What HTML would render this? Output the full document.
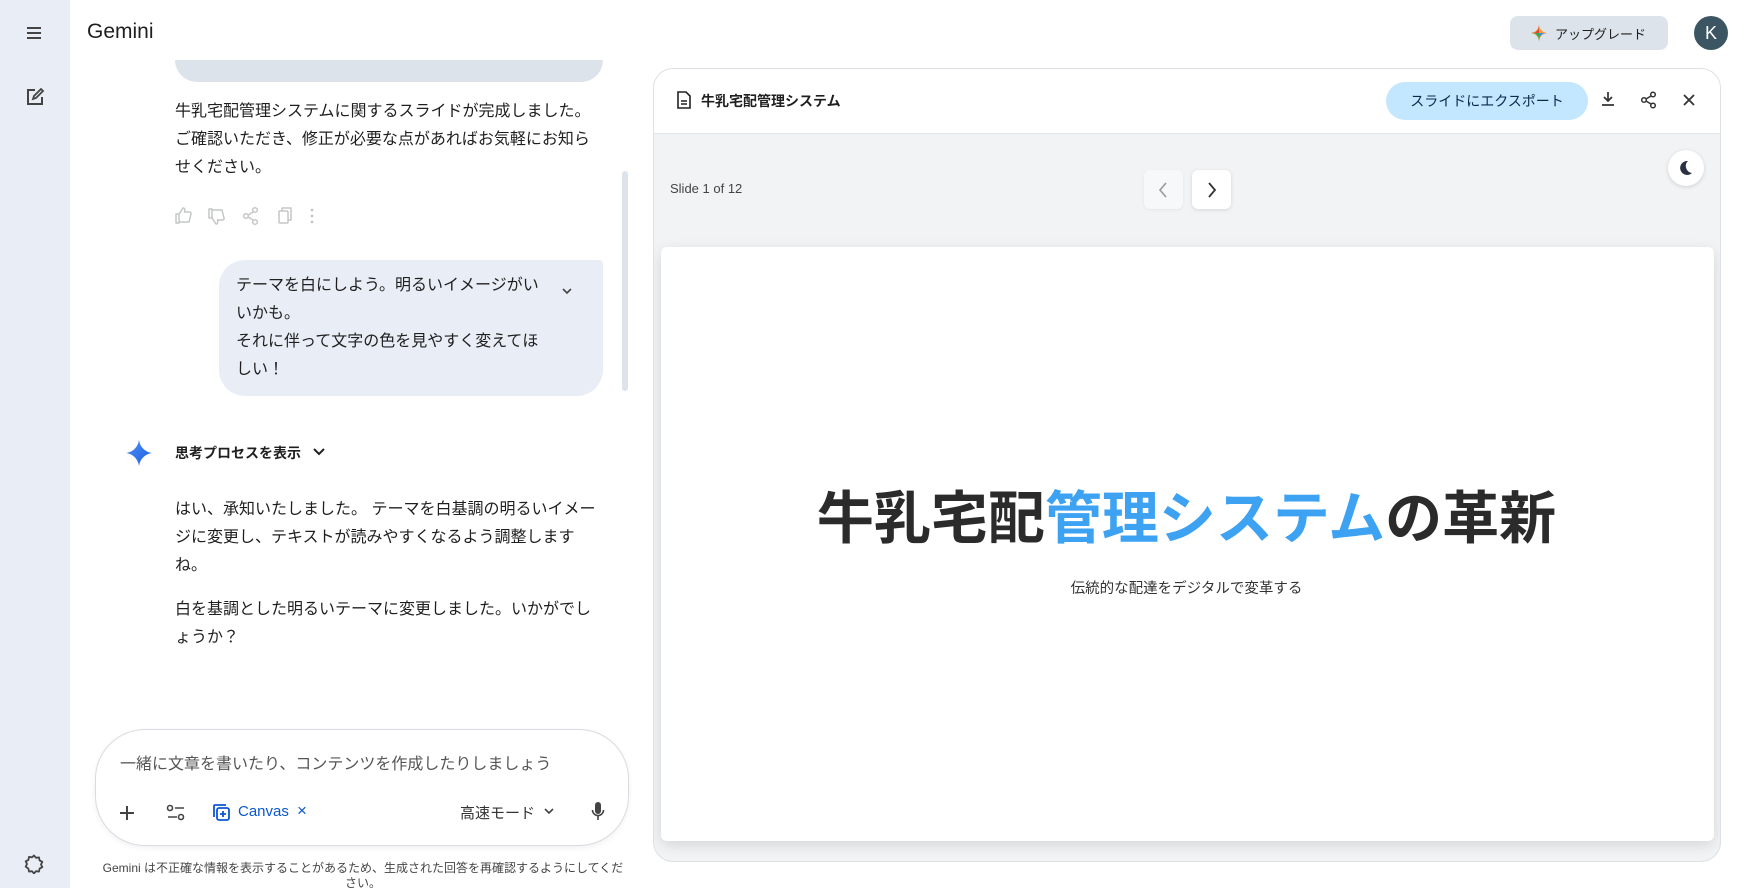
<!DOCTYPE html>
<html><head><meta charset="utf-8">
<style>
*{box-sizing:border-box;margin:0;padding:0}
body{width:1744px;height:888px;overflow:hidden;background:#fff;font-family:"Liberation Sans","Noto Sans CJK JP",sans-serif;color:#1f1f1f;position:relative}
.abs{position:absolute}
.side{left:0;top:0;width:70px;height:888px;background:#e9eef6}
.t{font-size:16px;line-height:28px;color:#1f1f1f;white-space:nowrap}
svg{display:block}
</style></head><body>
<div class="abs side"></div>
<svg class="abs" style="left:25px;top:25px" width="18" height="16"><path d="M2 3h14M2 8h14M2 13h14" stroke="#444" stroke-width="2"/></svg>
<svg class="abs" style="left:25px;top:87px" width="20" height="20" viewBox="0 0 20 20"><path d="M10 3H3v14h14v-7" fill="none" stroke="#444" stroke-width="2"/><path d="M8 12l1-3 7-7 2 2-7 7z" fill="none" stroke="#444" stroke-width="1.8"/></svg>
<svg class="abs" style="left:24px;top:854px" width="20" height="20" viewBox="0 0 20 20"><path d="M10 1.5l2 2.3 3-.4.6 3 2.7 1.4-1.3 2.7 1.3 2.7-2.7 1.4-.6 3-3-.4-2 2.3-2-2.3-3 .4-.6-3L1.7 12.7 3 10 1.7 7.3l2.7-1.4.6-3 3 .4z" fill="none" stroke="#444" stroke-width="1.8" stroke-linejoin="round"/></svg>
<div class="abs" style="left:87px;top:20px;font-size:21px;color:#1f1f1f">Gemini</div>

<div class="abs" style="left:175px;top:60px;width:428px;height:22px;background:#dde3ea;border-radius:0 0 22px 22px"></div>
<div class="abs t" style="left:175px;top:98px">牛乳宅配管理システムに関するスライドが完成しました。<br>ご確認いただき、修正が必要な点があればお気軽にお知ら<br>せください。</div>
<svg class="abs" style="left:174px;top:206px" width="150" height="20" viewBox="0 0 150 20">
<g fill="none" stroke="#c4c7c5" stroke-width="1.5" stroke-linejoin="round">
<path d="M2 8h3v9H2zM5 8l4-6c2 0 2 2 1.5 4h5c1 0 2 1 1.5 2l-2 8H5"/>
<path d="M35 12h3V3h-3zM38 12l4 6c2 0 2-2 1.5-4h5c1 0 2-1 1.5-2l-2-8H38"/>
<circle cx="81" cy="4" r="2.3"/><circle cx="72" cy="10" r="2.3"/><circle cx="81" cy="16" r="2.3"/><path d="M74 9l5-3M74 11l5 3"/>
<rect x="105" y="5" width="9" height="12" rx="1"/><path d="M108 5V2h9v12h-3"/>
</g><g fill="#c4c7c5"><circle cx="138" cy="4" r="1.4"/><circle cx="138" cy="10" r="1.4"/><circle cx="138" cy="16" r="1.4"/></g></svg>
<div class="abs" style="left:622px;top:171px;width:6px;height:220px;background:#dde3ea;border-radius:3px"></div>
<div class="abs" style="left:219px;top:260px;width:384px;height:136px;background:#e9eef6;border-radius:26px 4px 26px 26px"></div>
<div class="abs t" style="left:236px;top:272px">テーマを白にしよう。明るいイメージがい<br>いかも。<br>それに伴って文字の色を見やすく変えてほ<br>しい！</div>
<svg class="abs" style="left:561px;top:286px" width="12" height="10"><path d="M2 3l4 4 4-4" fill="none" stroke="#444" stroke-width="1.6"/></svg>
<svg class="abs" style="left:126px;top:440px" width="26" height="26" viewBox="0 0 26 26"><defs><linearGradient id="g" x1="0" y1="0" x2="1" y2="1"><stop offset="0" stop-color="#4f8ff7"/><stop offset="1" stop-color="#1a5fe0"/></linearGradient></defs><path d="M13 0C14 7 19 12 26 13 19 14 14 19 13 26 12 19 7 14 0 13 7 12 12 7 13 0z" fill="url(#g)"/></svg>
<div class="abs" style="left:175px;top:443px;font-size:14px;line-height:20px;font-weight:bold;color:#1f1f1f">思考プロセスを表示</div>
<svg class="abs" style="left:312px;top:446px" width="14" height="12"><path d="M2 3l5 5 5-5" fill="none" stroke="#222" stroke-width="2"/></svg>
<div class="abs t" style="left:175px;top:496px">はい、承知いたしました。 テーマを白基調の明るいイメー<br>ジに変更し、テキストが読みやすくなるよう調整します<br>ね。</div>
<div class="abs t" style="left:175px;top:596px">白を基調とした明るいテーマに変更しました。いかがでし<br>ょうか？</div>

<div class="abs" style="left:95px;top:729px;width:534px;height:117px;border:1px solid #d8dce2;border-radius:50px;background:#fff;box-shadow:0 2px 6px rgba(0,0,0,.06)"></div>
<div class="abs" style="left:120px;top:750px;font-size:16px;color:#555;white-space:nowrap">一緒に文章を書いたり、コンテンツを作成したりしましょう</div>
<svg class="abs" style="left:118px;top:804px" width="18" height="18"><path d="M9 2v14M2 9h14" stroke="#444" stroke-width="2"/></svg>
<svg class="abs" style="left:166px;top:804px" width="20" height="18"><circle cx="4" cy="4" r="2.5" fill="none" stroke="#444" stroke-width="1.6"/><path d="M9 4h9M2 13h9" stroke="#444" stroke-width="1.6"/><circle cx="15" cy="13" r="2.5" fill="none" stroke="#444" stroke-width="1.6"/></svg>
<svg class="abs" style="left:212px;top:803px" width="20" height="20" viewBox="0 0 20 20"><rect x="5" y="5" width="12" height="12" rx="2" fill="none" stroke="#0b57d0" stroke-width="1.8"/><path d="M2 14V3a1 1 0 011-1h11M11 8v6M8 11h6" fill="none" stroke="#0b57d0" stroke-width="1.8"/></svg>
<div class="abs" style="left:238px;top:803px;font-size:15px;color:#0b57d0">Canvas</div>
<div class="abs" style="left:297px;top:801px;font-size:17px;color:#0b57d0">×</div>
<div class="abs" style="left:460px;top:802px;font-size:15px;color:#333">高速モード</div>
<svg class="abs" style="left:543px;top:806px" width="12" height="10"><path d="M2 3l4 4 4-4" fill="none" stroke="#444" stroke-width="1.6"/></svg>
<svg class="abs" style="left:591px;top:801px" width="14" height="22"><rect x="4" y="1" width="6" height="12" rx="3" fill="#444"/><path d="M1.5 9a5.5 5.5 0 0011 0M7 15v4" fill="none" stroke="#444" stroke-width="1.6"/></svg>
<div class="abs" style="left:95px;top:861px;width:536px;text-align:center;font-size:12px;line-height:15px;color:#444">Gemini は不正確な情報を表示することがあるため、生成された回答を再確認するようにしてくだ<br>さい。</div>

<div class="abs" style="left:1510px;top:16px;width:158px;height:34px;background:#dde3ea;border-radius:8px"></div>
<svg class="abs" style="left:1531px;top:25px" width="16" height="16" viewBox="0 0 26 26"><path d="M13 0C14 7 19 12 26 13 19 14 14 19 13 26 12 19 7 14 0 13 7 12 12 7 13 0z" fill="#e8a33d"/><path d="M13 13L26 13 19 14 14 19 13 26z" fill="#4285f4"/><path d="M13 0L13 13 0 13 7 12 12 7z" fill="#ea4335"/><path d="M0 13L13 13 13 26 12 19 7 14z" fill="#34a853"/></svg>
<div class="abs" style="left:1555px;top:24px;font-size:13px;color:#1f1f1f">アップグレード</div>
<div class="abs" style="left:1694px;top:16px;width:34px;height:34px;border-radius:50%;background:#3c5562;color:#fff;font-size:18px;text-align:center;line-height:34px">K</div>

<div class="abs" style="left:653px;top:68px;width:1068px;height:794px;border:1px solid #dde0e4;border-radius:20px;background:#f1f3f5;overflow:hidden">
  <div class="abs" style="left:0;top:0;width:1068px;height:65px;background:#fff;border-bottom:1px solid #e2e5e9"></div>
  <div class="abs" style="left:7px;top:178px;width:1053px;height:594px;background:#fff;border-radius:6px;box-shadow:0 4px 14px rgba(0,0,0,.12)"></div>
</div>
<svg class="abs" style="left:677px;top:91px" width="14" height="18" viewBox="0 0 14 18"><path d="M1 1h8l4 4v12H1z" fill="none" stroke="#222" stroke-width="1.6"/><path d="M4 10h6M4 13h6" stroke="#222" stroke-width="1.4"/></svg>
<div class="abs" style="left:701px;top:91px;font-size:14px;font-weight:bold;color:#1f1f1f">牛乳宅配管理システム</div>
<div class="abs" style="left:1386px;top:82px;width:202px;height:38px;background:#c2e7ff;border-radius:19px;text-align:center;line-height:38px;font-size:14px;color:#0a2a4a">スライドにエクスポート</div>
<svg class="abs" style="left:1600px;top:91px" width="16" height="16"><path d="M8 1v9M4 6l4 4 4-4M2 14h12" fill="none" stroke="#333" stroke-width="1.7"/></svg>
<svg class="abs" style="left:1640px;top:91px" width="18" height="18"><circle cx="13" cy="3.5" r="2.3" fill="none" stroke="#333" stroke-width="1.5"/><circle cx="4" cy="9" r="2.3" fill="none" stroke="#333" stroke-width="1.5"/><circle cx="13" cy="14.5" r="2.3" fill="none" stroke="#333" stroke-width="1.5"/><path d="M6 8l5-3M6 10l5 3" stroke="#333" stroke-width="1.5"/></svg>
<svg class="abs" style="left:1682px;top:93px" width="14" height="14"><path d="M2 2l10 10M12 2L2 12" stroke="#333" stroke-width="1.8"/></svg>
<div class="abs" style="left:670px;top:181px;font-size:13px;color:#444">Slide 1 of 12</div>
<div class="abs" style="left:1144px;top:170px;width:39px;height:39px;background:#f7f8f9;border-radius:6px;box-shadow:0 1px 3px rgba(0,0,0,.06)"></div>
<div class="abs" style="left:1192px;top:170px;width:39px;height:39px;background:#fff;border-radius:6px;box-shadow:0 1px 4px rgba(0,0,0,.12)"></div>
<svg class="abs" style="left:1157px;top:181px" width="12" height="18"><path d="M9 2L3 9l6 7" fill="none" stroke="#999" stroke-width="1.6"/></svg>
<svg class="abs" style="left:1206px;top:181px" width="12" height="18"><path d="M3 2l6 7-6 7" fill="none" stroke="#333" stroke-width="1.8"/></svg>
<div class="abs" style="left:1668px;top:150px;width:36px;height:36px;border-radius:50%;background:#fff;box-shadow:0 1px 4px rgba(0,0,0,.15)"></div>
<svg class="abs" style="left:1677px;top:159px" width="18" height="18"><path d="M11 2a7 7 0 104 12A7 7 0 0111 2z" fill="#2a3142"/></svg>
<div class="abs" style="left:660px;top:473px;width:1053px;text-align:center;font-size:57px;font-weight:bold;color:#2b2b2b;white-space:nowrap">牛乳宅配<span style="color:#3ea2f2">管理システム</span>の革新</div>
<div class="abs" style="left:660px;top:577px;width:1053px;text-align:center;font-size:14.5px;color:#333">伝統的な配達をデジタルで変革する</div>
</body></html>
